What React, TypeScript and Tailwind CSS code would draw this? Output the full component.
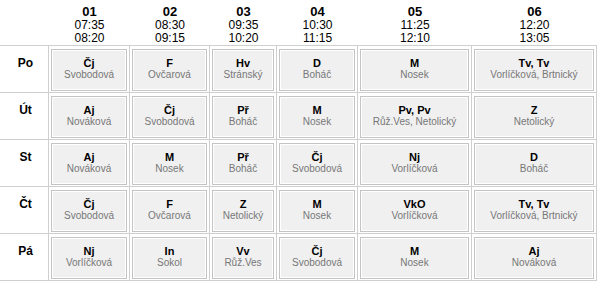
import React from 'react';

type Lesson = { subject: string; teacher: string };

const periods = [
  { num: '01', from: '07:35', to: '08:20' },
  { num: '02', from: '08:30', to: '09:15' },
  { num: '03', from: '09:35', to: '10:20' },
  { num: '04', from: '10:30', to: '11:15' },
  { num: '05', from: '11:25', to: '12:10' },
  { num: '06', from: '12:20', to: '13:05' },
];

const days: { day: string; lessons: Lesson[] }[] = [
  {
    day: 'Po',
    lessons: [
      { subject: 'Čj', teacher: 'Svobodová' },
      { subject: 'F', teacher: 'Ovčarová' },
      { subject: 'Hv', teacher: 'Stránský' },
      { subject: 'D', teacher: 'Boháč' },
      { subject: 'M', teacher: 'Nosek' },
      { subject: 'Tv, Tv', teacher: 'Vorlíčková, Brtnický' },
    ],
  },
  {
    day: 'Út',
    lessons: [
      { subject: 'Aj', teacher: 'Nováková' },
      { subject: 'Čj', teacher: 'Svobodová' },
      { subject: 'Př', teacher: 'Boháč' },
      { subject: 'M', teacher: 'Nosek' },
      { subject: 'Pv, Pv', teacher: 'Růž.Ves, Netolický' },
      { subject: 'Z', teacher: 'Netolický' },
    ],
  },
  {
    day: 'St',
    lessons: [
      { subject: 'Aj', teacher: 'Nováková' },
      { subject: 'M', teacher: 'Nosek' },
      { subject: 'Př', teacher: 'Boháč' },
      { subject: 'Čj', teacher: 'Svobodová' },
      { subject: 'Nj', teacher: 'Vorlíčková' },
      { subject: 'D', teacher: 'Boháč' },
    ],
  },
  {
    day: 'Čt',
    lessons: [
      { subject: 'Čj', teacher: 'Svobodová' },
      { subject: 'F', teacher: 'Ovčarová' },
      { subject: 'Z', teacher: 'Netolický' },
      { subject: 'M', teacher: 'Nosek' },
      { subject: 'VkO', teacher: 'Vorlíčková' },
      { subject: 'Tv, Tv', teacher: 'Vorlíčková, Brtnický' },
    ],
  },
  {
    day: 'Pá',
    lessons: [
      { subject: 'Nj', teacher: 'Vorlíčková' },
      { subject: 'In', teacher: 'Sokol' },
      { subject: 'Vv', teacher: 'Růž.Ves' },
      { subject: 'Čj', teacher: 'Svobodová' },
      { subject: 'M', teacher: 'Nosek' },
      { subject: 'Aj', teacher: 'Nováková' },
    ],
  },
];

function LessonBox({ lesson }: { lesson: Lesson }) {
  return (
    <div className="h-full px-[2px] pt-[3px] pb-[1px]">
      <div className="h-full border border-[#c4c4c4] bg-[#f0f0f0] shadow-[inset_0_0_0_1px_#ffffff] flex flex-col items-center justify-center pb-[3px]">
        <div className="text-[11px] leading-[12px] font-bold text-black">{lesson.subject}</div>
        <div className="text-[10px] leading-[11px] text-[#777777] whitespace-nowrap">{lesson.teacher}</div>
      </div>
    </div>
  );
}

export default function App() {
  return (
    <div className="w-[600px] h-[284px] bg-white font-['Liberation_Sans',Arial,sans-serif] overflow-hidden">
      <div className="grid grid-cols-[49px_81px_80px_67px_81px_114px_125px] grid-rows-[46px_47px_47px_47px_47px_47px]">
        {/* header */}
        <div className="border-b border-[#cfcfcf]" />
        {periods.map((p) => (
          <div key={p.num} className="border-b border-[#cfcfcf] flex flex-col items-center pt-[4px] text-black">
            <div className="text-[13px] leading-[15px] font-bold">{p.num}</div>
            <div className="text-[12px] leading-[13px]">{p.from}</div>
            <div className="text-[12px] leading-[13px]">{p.to}</div>
          </div>
        ))}

        {/* body */}
        {days.map((d) => (
          <React.Fragment key={d.day}>
            <div className="border-b border-r border-[#cfcfcf] flex justify-center pl-[3px] pt-[10px]">
              <span className="text-[12px] leading-[14px] font-bold text-black">{d.day}</span>
            </div>
            {d.lessons.map((l, i) => (
              <div key={i} className="border-b border-r border-[#cfcfcf]">
                <LessonBox lesson={l} />
              </div>
            ))}
          </React.Fragment>
        ))}
      </div>
    </div>
  );
}
